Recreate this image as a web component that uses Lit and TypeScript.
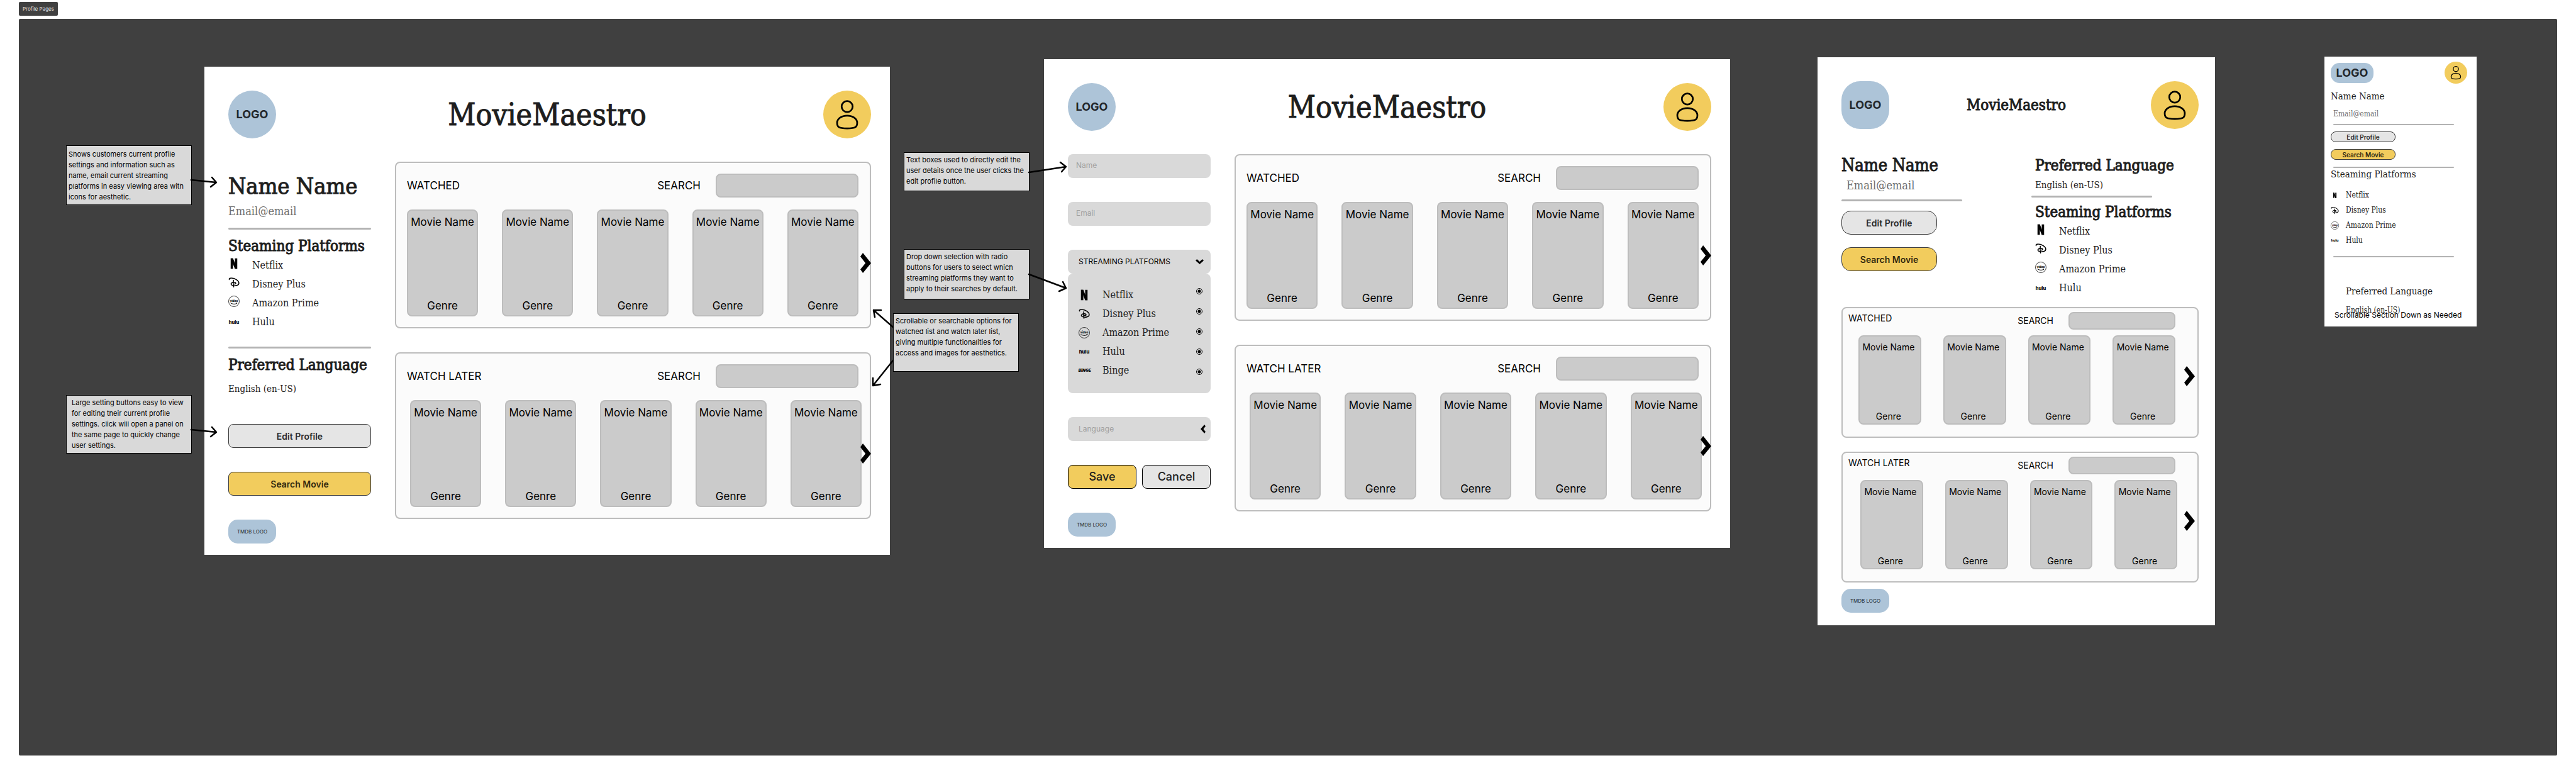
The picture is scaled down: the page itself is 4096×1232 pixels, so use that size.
import { LitElement, html, svg, css, nothing, TemplateResult } from "lit";
import { customElement, property } from "lit/decorators.js";

type Brand = "netflix" | "disney" | "amazon" | "hulu" | "binge";

interface Platform {
  brand: Brand;
  name: string;
}

const PLATFORMS: Platform[] = [
  { brand: "netflix", name: "Netflix" },
  { brand: "disney", name: "Disney Plus" },
  { brand: "amazon", name: "Amazon Prime" },
  { brand: "hulu", name: "Hulu" },
];

const BRAND_MARKS: Record<Brand, TemplateResult> = {
  netflix: svg`<rect x="5" y="1" width="5" height="22"/><rect x="14" y="1" width="5" height="22"/><path d="M5 1h5l9 22h-5z"/>`,
  disney: svg`<g fill="none" stroke="#000" stroke-width="2" stroke-linecap="round">
    <path d="M2 6C1 3.500 4 2.500 7 2.700C14 3 22.500 8 22.500 13.500C22.500 18.500 15 19.500 10 18.500C5.500 17.500 4.500 14.500 7.500 12.700C10.500 11 15.500 11.500 16 13.500C16.300 15 14 15.500 12.500 15.300"/>
    <path d="M11 7.500C10.300 12 10.500 17.500 11.500 21.500"/></g>`,
  amazon: svg`<circle cx="12" cy="12" r="11.300" fill="none" stroke="#000" stroke-width="1"/>
    <text x="12" y="13" text-anchor="middle" font-family="Inter, sans-serif" font-size="6" font-weight="800">video</text>
    <path d="M5 15.500C9 18.500 15 18.500 18 16.300" fill="none" stroke="#000" stroke-width="1.300" stroke-linecap="round"/>
    <path d="M16.200 15l3-.400-.700 3z"/>`,
  hulu: svg`<text x="12" y="15.500" text-anchor="middle" font-family="Inter, sans-serif" font-size="10" font-weight="800">hulu</text>`,
  binge: svg`<text x="13" y="15" text-anchor="middle" font-family="Inter, sans-serif" font-size="8.500" font-weight="900" font-style="italic">BiNGE</text>`,
};

const sharedStyles = css`
  * {
    box-sizing: border-box;
  }
  h1,
  h2,
  h3,
  p,
  ul {
    margin: 0;
    padding: 0;
    font-size: inherit;
    font-weight: 400;
  }
  ul {
    list-style: none;
  }
  button,
  input,
  select {
    font: inherit;
    color: inherit;
    margin: 0;
    padding: 0;
    border: 0;
    background: none;
    appearance: none;
  }
  svg {
    display: block;
  }
`;

/** Blue placeholder mark for the site logo and the data provider's logo. */
@customElement("logo-mark")
export class LogoMark extends LitElement {
  @property() label = "LOGO";

  static styles = css`
    :host {
      display: flex;
      align-items: center;
      justify-content: center;
      flex: none;
      width: 76px;
      height: 76px;
      border-radius: 38px;
      background: #adc4d8;
      color: #23272b;
      font: 700 18px/20px Inter, sans-serif;
    }
    :host([kind="soft"]) {
      border-radius: 30px;
    }
    :host([kind="compact"]) {
      width: 68px;
      height: 32px;
      border-radius: 14px;
    }
    :host([kind="credit"]) {
      height: 38px;
      border-radius: 15px;
      font-size: 8px;
      font-weight: 400;
    }
  `;

  render() {
    return html`${this.label}`;
  }
}

@customElement("avatar-button")
export class AvatarButton extends LitElement {
  static styles = [
    sharedStyles,
    css`
      :host {
        display: block;
        flex: none;
        width: 76px;
        height: 76px;
      }
      :host([compact]) {
        width: 36px;
        height: 35px;
      }
      .avatar {
        display: block;
        width: 100%;
        height: 100%;
        border-radius: 50%;
        background: #f2cc5d;
      }
      svg {
        width: 100%;
        height: 100%;
      }
    `,
  ];

  render() {
    return html`<button class="avatar" aria-label="Account">
      <svg viewBox="0 0 100 100" preserveAspectRatio="none" fill="none" stroke="#000" stroke-width="3.600">
        <circle cx="50" cy="33.500" r="11.500" />
        <path d="M50 52.500C62 52.500 71 59 71 67.500C71 76 68 79 50 79C32 79 29 76 29 67.500C29 59 38 52.500 50 52.500Z" />
      </svg>
    </button>`;
  }
}

@customElement("platform-list")
export class PlatformList extends LitElement {
  @property({ attribute: false }) items: Platform[] = PLATFORMS;

  static styles = [
    sharedStyles,
    css`
      :host {
        display: block;
        font: 16px/30px "DejaVu Serif Condensed", "DejaVu Serif", serif;
        color: #222;
      }
      .row {
        display: flex;
        align-items: flex-start;
        gap: 20px;
      }
      .icon {
        width: 18px;
        height: 18px;
        flex: none;
        margin-top: 3px;
        overflow: visible;
      }
      .hulu {
        align-self: center;
        margin-top: 0;
      }
      :host([compact]) {
        font-size: 12px;
        line-height: 24px;
      }
      :host([compact]) .row {
        align-items: center;
        gap: 11px;
      }
      :host([compact]) .icon {
        width: 13px;
        height: 13px;
        margin-top: 0;
      }
      :host([compact]) .netflix {
        padding: 2px;
      }
    `,
  ];

  render() {
    return html`<ul>
      ${this.items.map(
        (p) => html`<li class="row">
          <svg class="icon ${p.brand}" viewBox="0 0 24 24" aria-hidden="true">${BRAND_MARKS[p.brand]}</svg>
          <span>${p.name}</span>
        </li>`
      )}
    </ul>`;
  }
}

/** A titled shelf of movie cards with a search box and a paging arrow. */
@customElement("movie-panel")
export class MoviePanel extends LitElement {
  @property() heading = "";
  @property({ type: Number }) count = 5;

  static styles = [
    sharedStyles,
    css`
      :host {
        --pad: 17px 18px 17px 17px;
        --search-width: 227px;
        --card-height: 170px;
        --card-gap: 38px;
        --shift: 5px;
        --row-pad: 0 0 0 0;
        --arrow-top: 143px;
        --arrow-right: -2px;
        display: block;
        font: 17px/24px Inter, sans-serif;
        color: #000;
      }
      :host([tablet]) {
        --pad: 6px 35px 19px 9px;
        --search-width: 170px;
        --card-height: 142px;
        --card-gap: 35px;
        --shift: 3px;
        --row-pad: 0 0 0 16px;
        --arrow-top: 92px;
        --arrow-right: 4px;
        font-size: 14px;
        line-height: 20px;
      }
      .panel {
        position: relative;
        display: flex;
        flex-direction: column;
        gap: 19px;
        padding: var(--pad);
        border: 2px solid #bdbdbd;
        border-radius: 8px;
        background: #fbfbfb;
      }
      .top {
        display: flex;
        align-items: center;
        justify-content: space-between;
      }
      .search {
        display: flex;
        align-items: center;
        gap: 24px;
      }
      .field {
        width: var(--search-width);
        height: 38px;
        padding: 0 10px;
        border: 2px solid #bdbdbd;
        border-radius: 8px;
        background: #cbcbcb;
      }
      .cards {
        display: grid;
        grid-auto-flow: column;
        grid-auto-columns: minmax(0, 1fr);
        gap: var(--card-gap);
        padding: var(--row-pad);
      }
      :host([shifted]) .cards {
        margin: 0 calc(0px - var(--shift)) 0 var(--shift);
      }
      .card {
        display: flex;
        flex-direction: column;
        align-items: center;
        justify-content: space-between;
        height: var(--card-height);
        padding: 6px 0 3px;
        border: 2px solid #bdbdbd;
        border-radius: 8px;
        background: #cbcbcb;
        white-space: nowrap;
      }
      .next {
        position: absolute;
        top: var(--arrow-top);
        right: var(--arrow-right);
      }
      :host([tablet]) .panel {
        gap: 9px;
      }
      :host([tablet]) .top {
        align-items: flex-start;
      }
      :host([tablet]) .field {
        height: 28px;
      }
      :host([tablet]) .card {
        padding: 7px 4px 1px 0;
      }
    `,
  ];

  render() {
    return html`<section class="panel">
      <div class="top">
        <h3>${this.heading}</h3>
        <div class="search">
          <label for="query">SEARCH</label>
          <input class="field" id="query" type="search" />
        </div>
      </div>
      <ul class="cards">
        ${Array.from(
          { length: this.count },
          () => html`<li class="card"><span>Movie Name</span><span>Genre</span></li>`
        )}
      </ul>
      <button class="next" aria-label="Next movies">
        <svg width="17" height="32" viewBox="0 0 50 95" preserveAspectRatio="none">
          <path d="M12 0L50 48L12 95L0 78L24 48L0 17Z" />
        </svg>
      </button>
    </section>`;
  }
}

@customElement("profile-form")
export class ProfileForm extends LitElement {
  static styles = [
    sharedStyles,
    css`
      :host {
        display: block;
        font: 12px/20px Inter, sans-serif;
      }
      .form {
        display: flex;
        flex-direction: column;
        gap: 38px;
      }
      .box {
        display: block;
        width: 100%;
        height: 38px;
        padding: 0 17px;
        border-radius: 8px;
        background: #d9d9d9;
        color: #a0a0a0;
      }
      .text::placeholder {
        color: #a0a0a0;
        opacity: 1;
      }
      .text {
        padding: 0 13px 3px;
      }
      .toggle {
        display: flex;
        align-items: center;
        justify-content: space-between;
        padding-right: 11px;
        color: #000;
      }
      .options {
        display: flex;
        justify-content: space-between;
        height: 190px;
        padding: 19px 13px 0 17px;
        border-radius: 8px;
        background: #d9d9d9;
        color: #222;
        font: 16px/30px "DejaVu Serif Condensed", "DejaVu Serif", serif;
      }
      .name {
        display: flex;
        align-items: center;
        gap: 20px;
      }
      .icon {
        width: 18px;
        height: 18px;
        overflow: visible;
      }
      .radios {
        display: flex;
        flex-direction: column;
        gap: 22px;
        padding-top: 4px;
      }
      .radio {
        display: block;
        width: 10px;
        height: 10px;
        border: 1px solid #000;
        border-radius: 50%;
        background: radial-gradient(circle, #000 0 2px, transparent 3px);
      }
      .language {
        position: relative;
      }
      .mark {
        position: absolute;
        top: 12px;
        right: 8px;
        pointer-events: none;
      }
      .actions {
        display: grid;
        grid-template-columns: 1fr 1fr;
        gap: 9px;
        font-size: 18px;
        font-weight: 500;
      }
      .action {
        height: 38px;
        border: 1px solid #000;
        border-radius: 8px;
        background: #e5e5e5;
      }
      .primary {
        background: #f2cc5d;
      }
    `,
  ];

  render() {
    const items: Platform[] = [...PLATFORMS, { brand: "binge", name: "Binge" }];
    return html`<form class="form" @submit=${(e: Event) => e.preventDefault()}>
      <input class="box text" aria-label="Name" placeholder="Name" />
      <input class="box text" type="email" aria-label="Email" placeholder="Email" />
      <div>
        <button class="box toggle" type="button" aria-expanded="true">
          <span>STREAMING PLATFORMS</span>
          <svg width="13" height="8" viewBox="0 0 95 56" preserveAspectRatio="none">
            <path d="M0 16L16 0L48 28L79 0L95 16L48 56Z" />
          </svg>
        </button>
        <div class="options">
          <div>
            ${items.map(
              (p) => html`<label class="name" for=${p.brand}>
                <svg class="icon" viewBox="0 0 24 24" aria-hidden="true">${BRAND_MARKS[p.brand]}</svg>
                <span>${p.name}</span>
              </label>`
            )}
          </div>
          <div class="radios">
            ${items.map((p) => html`<input class="radio" type="radio" id=${p.brand} name=${p.brand} checked />`)}
          </div>
        </div>
      </div>
      <div class="language">
        <select class="box" aria-label="Language">
          <option>Language</option>
        </select>
        <svg class="mark" width="8" height="14" viewBox="0 0 50 95" preserveAspectRatio="none">
          <path d="M38 0L0 48L38 95L50 78L28 48L50 17Z" />
        </svg>
      </div>
      <div class="actions">
        <button class="action primary" type="submit">Save</button>
        <button class="action" type="button">Cancel</button>
      </div>
      <logo-mark kind="credit" label="TMDB LOGO"></logo-mark>
    </form>`;
  }
}

/** A sticky comment with connector arrows drawn over the neighbouring frame. */
@customElement("canvas-note")
export class CanvasNote extends LitElement {
  @property({ attribute: false }) arrows: string[] = [];
  @property() side: "left" | "right" = "right";

  static styles = [
    sharedStyles,
    css`
      :host {
        position: relative;
        display: block;
        width: 200px;
        padding: 3px;
        border: 1px solid #000;
        background: #d9d9d9;
        color: #000;
        font: 11px/17px Inter, sans-serif;
        white-space: nowrap;
      }
      .arrows {
        position: absolute;
        top: -1px;
        width: 1px;
        height: 1px;
        overflow: visible;
      }
      .right {
        left: 100%;
      }
      .left {
        left: -1px;
      }
    `,
  ];

  render() {
    return html`<slot></slot>
      <svg class="arrows ${this.side}" fill="none" stroke="#000" stroke-width="2.500" stroke-linecap="round" stroke-linejoin="round" aria-hidden="true">
        ${this.arrows.map((d) => svg`<path d=${d} />`)}
      </svg>`;
  }
}

const NOTE_ARROW = "M0 55L40 59M33 51L40 59L31 66";

@customElement("app-root")
export class AppRoot extends LitElement {
  static styles = [
    sharedStyles,
    css`
      :host {
        display: block;
        background: #fff;
        font-family: Inter, sans-serif;
      }
      .page {
        display: flex;
        flex-direction: column;
        align-items: flex-start;
        gap: 5px;
        min-height: 100vh;
        padding: 3px 30px 31px;
      }
      .tag {
        padding: 0 6px;
        border-radius: 2px;
        background: #404040;
        color: #e6e6e6;
        font-size: 8px;
        line-height: 22px;
      }
      .canvas {
        flex: 1;
        width: 100%;
        display: grid;
        align-items: start;
        grid-template-columns:
          minmax(0, 295fr) minmax(0, 1090fr) minmax(0, 245fr) minmax(0, 1091fr) minmax(0, 139fr)
          minmax(0, 632fr) minmax(0, 174fr) minmax(0, 242fr) minmax(0, 128fr);
        border-radius: 2px;
        background: #404040;
      }
      .notes {
        position: relative;
        z-index: 1;
        display: flex;
        flex-direction: column;
      }
      .notes-a {
        align-items: flex-end;
        gap: 302px;
        padding: 201px 20px 0 0;
      }
      .notes-b {
        padding: 212px 0 0 5px;
      }
      .roomy {
        padding-top: 5px;
      }
      .inset {
        padding-left: 8px;
      }
      .two {
        margin-left: 17px;
        padding-bottom: 6px;
      }
      .four {
        margin: 92px 0 22px 17px;
        padding-bottom: 7px;
      }
      .five {
        padding-bottom: 20px;
      }
      .frame {
        display: flex;
        flex-direction: column;
        background: #fff;
        color: #1e1e1e;
      }
      .header {
        display: grid;
        grid-template-columns: 1fr auto 1fr;
        align-items: center;
      }
      .header avatar-button {
        justify-self: end;
      }
      .title,
      .person,
      .section,
      .email,
      .locale {
        font-family: "DejaVu Serif Condensed", "DejaVu Serif", serif;
        white-space: nowrap;
      }
      .title,
      .person,
      .section {
        -webkit-text-stroke: 1px #1e1e1e;
      }
      .section {
        font-size: 24px;
        line-height: 32px;
      }
      .email {
        font-size: 18px;
        line-height: 24px;
        color: #6e6e6e;
      }
      .locale {
        font-size: 15px;
        line-height: 24px;
      }
      .rule {
        width: 100%;
        height: 3px;
        margin: 0;
        border: 0;
        border-radius: 2px;
        background: #b3b3b3;
      }
      .action {
        display: block;
        width: 100%;
        height: 38px;
        border: 1px solid #3c3c3c;
        border-radius: 8px;
        background: #e5e5e5;
        color: #2c2c2c;
        font-size: 14px;
        font-weight: 600;
      }
      .primary {
        background: #f2cc5d;
        color: #33290f;
      }

      /* The negative header margins keep the titles centred on frames with uneven side padding. */
      .desktop {
        margin-top: 76px;
        padding: 38px 30px 18px 38px;
        gap: 37px;
      }
      .editing {
        margin-top: 64px;
      }
      .desktop .header {
        margin-left: -8px;
      }
      .desktop .header logo-mark {
        margin-left: 8px;
      }
      .desktop .title {
        font-size: 48px;
        line-height: 60px;
      }
      .columns {
        display: grid;
        grid-template-columns: 227px minmax(0, 1fr);
        gap: 38px;
        align-items: start;
      }
      .panels {
        display: flex;
        flex-direction: column;
        gap: 38px;
      }
      .profile {
        padding-top: 17px;
      }
      .profile .person {
        font-size: 36px;
        line-height: 44px;
      }
      .profile .email {
        margin: 6px 0 14px;
      }
      .profile .section {
        margin-top: 10px;
      }
      .profile platform-list {
        margin-bottom: 24px;
      }
      .profile .locale {
        margin: 10px 0 44px;
      }
      .profile .action {
        margin-bottom: 38px;
      }

      .tablet {
        margin-top: 61px;
        padding: 38px 26px 20px 38px;
      }
      .tablet .header {
        margin-left: -12px;
      }
      .tablet .header logo-mark {
        margin-left: 12px;
      }
      .tablet .title {
        font-size: 24px;
        line-height: 32px;
      }
      .details {
        display: grid;
        grid-template-columns: 308fr 260fr;
        margin: 42px 0 15px;
      }
      .details .person {
        font-size: 27px;
        line-height: 32px;
      }
      .details .email {
        margin: 4px 0 10px 8px;
      }
      .details .rule {
        width: 192px;
      }
      .details .action {
        width: 152px;
        border-radius: 15px;
        margin-top: 20px;
      }
      .details .rule + .action {
        margin-top: 15px;
      }
      .details .locale {
        margin: 3px 0 5px;
      }
      .outset {
        margin: 0 0 7px -6px;
      }
      .tablet .panels {
        gap: 22px;
        margin-bottom: 10px;
      }

      .phone {
        position: relative;
        margin-top: 60px;
        padding: 8px 15px 18px 10px;
      }
      .phone .header {
        display: flex;
        justify-content: space-between;
      }
      .phone .person,
      .phone .section {
        -webkit-text-stroke: 0;
      }
      .phone .person {
        margin-top: 10px;
        font-size: 15px;
        line-height: 20px;
      }
      .phone .email {
        margin: 10px 0 8px 4px;
        font-size: 12px;
        line-height: 16px;
      }
      .phone .rule {
        width: 192px;
        height: 2px;
        margin-left: 4px;
      }
      .phone .action {
        width: 103px;
        height: 17px;
        margin-top: 10px;
        border-radius: 8px;
        font-size: 10px;
        line-height: 14px;
      }
      .phone .primary {
        margin: 11px 0;
      }
      .phone .section {
        margin: 1px 0 12px;
        font-size: 15px;
        line-height: 18px;
      }
      .phone .last {
        margin-top: 13px;
      }
      .phone .preferred {
        margin: 44px 0 12px 24px;
        line-height: 20px;
      }
      .phone .locale {
        margin-left: 24px;
        font-size: 12px;
        line-height: 16px;
      }
      .hint {
        position: absolute;
        left: 16px;
        bottom: 10px;
        color: #000;
        font-size: 12px;
        line-height: 16px;
        white-space: nowrap;
      }
    `,
  ];

  private shelves(tablet: boolean) {
    const count = tablet ? 4 : 5;
    return html`<div class="panels">
      <movie-panel heading="WATCHED" .count=${count} ?tablet=${tablet}></movie-panel>
      <movie-panel heading="WATCH LATER" .count=${count} ?tablet=${tablet} shifted></movie-panel>
    </div>`;
  }

  private header(kind?: string) {
    return html`<header class="header">
      <logo-mark kind=${kind ?? nothing}></logo-mark>
      ${kind === "compact" ? nothing : html`<h1 class="title">MovieMaestro</h1>`}
      <avatar-button ?compact=${kind === "compact"}></avatar-button>
    </header>`;
  }

  render() {
    return html`<main class="page">
      <div class="tag">Profile Pages</div>
      <div class="canvas">
        <div class="notes notes-a">
          <canvas-note class="roomy" .arrows=${[NOTE_ARROW]}>
            Shows customers current profile<br />settings and information such as<br />name, email current streaming<br />platforms
            in easy viewing area with<br />icons for aesthetic.
          </canvas-note>
          <canvas-note class="inset" .arrows=${[NOTE_ARROW]}>
            Large setting buttons easy to view<br />for editing their current profile<br />settings. click will open a panel on<br />the
            same page to quickly change<br />user settings.
          </canvas-note>
        </div>

        <article class="frame desktop">
          ${this.header()}
          <div class="columns">
            <div class="profile">
              <h2 class="person">Name Name</h2>
              <p class="email">Email@email</p>
              <hr class="rule" />
              <h3 class="section">Steaming Platforms</h3>
              <platform-list></platform-list>
              <hr class="rule" />
              <h3 class="section">Preferred Language</h3>
              <p class="locale">English (en-US)</p>
              <button class="action">Edit Profile</button>
              <button class="action primary">Search Movie</button>
              <logo-mark kind="credit" label="TMDB LOGO"></logo-mark>
            </div>
            ${this.shelves(false)}
          </div>
        </article>

        <div class="notes notes-b">
          <canvas-note class="two" .arrows=${["M0 32L59 23M50 16L59 23L52 31"]}>
            Text boxes used to directly edit the<br />user details once the user clicks the<br />edit profile button.
          </canvas-note>
          <canvas-note class="four" .arrows=${["M0 40L59 62M54 52L59 62L48 67"]}>
            Drop down selection with radio<br />buttons for users to select which<br />streaming platforms they want to<br />apply
            to their searches by default.
          </canvas-note>
          <canvas-note
            class="five"
            side="left"
            .arrows=${["M0 22L-31 -5M-19 -5L-31 -5L-29 6", "M0 75L-32 115M-32 103L-32 115L-20 113"]}
          >
            Scrollable or searchable options for<br />watched list and watch later list,<br />giving multiple functionalities
            for<br />access and images for aesthetics.
          </canvas-note>
        </div>

        <article class="frame desktop editing">
          ${this.header()}
          <div class="columns">
            <profile-form></profile-form>
            ${this.shelves(false)}
          </div>
        </article>

        <div></div>

        <article class="frame tablet">
          ${this.header("soft")}
          <div class="details">
            <div>
              <h2 class="person">Name Name</h2>
              <p class="email">Email@email</p>
              <hr class="rule" />
              <button class="action">Edit Profile</button>
              <button class="action primary">Search Movie</button>
            </div>
            <div>
              <h3 class="section">Preferred Language</h3>
              <p class="locale">English (en-US)</p>
              <hr class="rule outset" />
              <h3 class="section">Steaming Platforms</h3>
              <platform-list></platform-list>
            </div>
          </div>
          ${this.shelves(true)}
          <logo-mark kind="credit" label="TMDB LOGO"></logo-mark>
        </article>

        <div></div>

        <article class="frame phone">
          ${this.header("compact")}
          <h2 class="person">Name Name</h2>
          <p class="email">Email@email</p>
          <hr class="rule" />
          <button class="action">Edit Profile</button>
          <button class="action primary">Search Movie</button>
          <hr class="rule" />
          <h3 class="section">Steaming Platforms</h3>
          <platform-list compact></platform-list>
          <hr class="rule last" />
          <h3 class="section preferred">Preferred Language</h3>
          <p class="locale">English (en-US)</p>
          <p class="hint">Scrollable Section Down as Needed</p>
        </article>
      </div>
    </main>`;
  }
}
